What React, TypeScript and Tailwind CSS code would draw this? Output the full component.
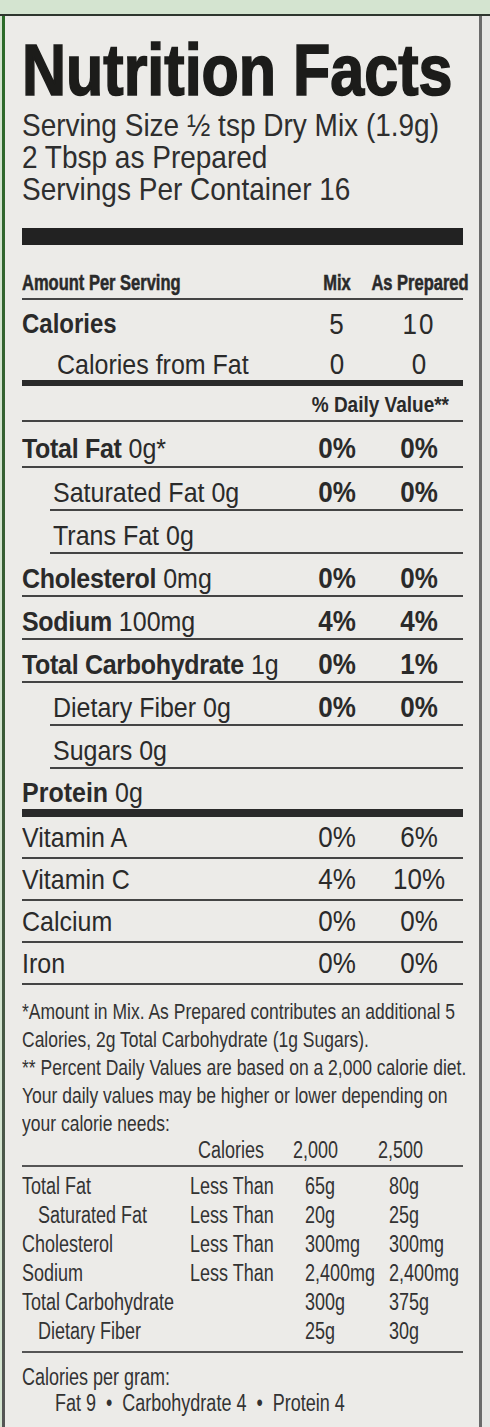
const nutrients = [
  { label: "Total Fat", amount: "0g*", bold: true, mix: "0%", prep: "0%", pad: "pt-[12px] pb-[2px]" },
  { label: "Saturated Fat", amount: "0g", indent: true, mix: "0%", prep: "0%" },
  { label: "Trans Fat", amount: "0g", indent: true },
  { label: "Cholesterol", amount: "0mg", bold: true, mix: "0%", prep: "0%" },
  { label: "Sodium", amount: "100mg", bold: true, mix: "4%", prep: "4%" },
  { label: "Total Carbohydrate", amount: "1g", bold: true, mix: "0%", prep: "1%" },
  { label: "Dietary Fiber", amount: "0g", indent: true, mix: "0%", prep: "0%" },
  { label: "Sugars", amount: "0g", indent: true },
];

const vitamins = [
  { label: "Vitamin A", mix: "0%", prep: "6%" },
  { label: "Vitamin C", mix: "4%", prep: "10%" },
  { label: "Calcium", mix: "0%", prep: "0%" },
  { label: "Iron", mix: "0%", prep: "0%" },
];

const limits = [
  { label: "Total Fat", less: "Less Than", a: "65g", b: "80g" },
  { label: "Saturated Fat", less: "Less Than", a: "20g", b: "25g", indent: true },
  { label: "Cholesterol", less: "Less Than", a: "300mg", b: "300mg" },
  { label: "Sodium", less: "Less Than", a: "2,400mg", b: "2,400mg" },
  { label: "Total Carbohydrate", less: "", a: "300g", b: "375g" },
  { label: "Dietary Fiber", less: "", a: "25g", b: "30g", indent: true },
];

// stretch text vertically a bit, the label uses a condensed face
const tall = "origin-[0_23px] scale-y-[1.14] whitespace-nowrap";
const tallC = "flex justify-center origin-[50%_23px] scale-y-[1.14] whitespace-nowrap";
const foot = "origin-[0_20px] scale-y-[1.28] whitespace-nowrap";
const small = "origin-[0_20px] scale-y-[1.28] whitespace-nowrap";

const App = () => {
  return (
    <div className="w-[490px] h-[1427px] overflow-hidden bg-[#d4e4d0] flex flex-col font-['Liberation_Sans',Arial,sans-serif] text-[#2a2a2a]">
      <div className="h-[14px] shrink-0" />
      <div className="flex flex-1 border-t-2 border-[#2e362e]">
        <div className="w-[2px]" />
        <div className="w-[3px] bg-gradient-to-b from-[#2c6b29] via-[#3a5a36] to-[#555]" />
        {/* Label */}
        <div className="w-[477px] bg-[#ecebe8] pl-[17px] pr-[16px] border-r-[3px] border-[#6a6a6a]">
          <h1 className="mt-[23px] h-[70px] text-[61px] leading-[70px] font-bold whitespace-nowrap text-[#1c1c1a] origin-[0_56px] scale-y-[1.18] [-webkit-text-stroke:1.4px_#1c1c1a]">
            Nutrition Facts
          </h1>
          <div className="mt-[2px] text-[28px] leading-[32px] text-[#2e2e2e]">
            <p className="origin-[0_25px] scale-y-[1.1]">Serving Size ½ tsp Dry Mix (1.9g)</p>
            <p className="origin-[0_25px] scale-y-[1.1]">2 Tbsp as Prepared</p>
            <p className="origin-[0_25px] scale-y-[1.1]">Servings Per Container 16</p>
          </div>
          <div className="mt-[21px] h-[17px] bg-[#222]" />

          {/* header */}
          <div className="mt-[29px] grid grid-cols-[1fr_76px_88px] text-[16.5px] leading-[20px] font-bold pb-[4px] border-b-2 border-[#444] [-webkit-text-stroke:0.4px_#2a2a2a]">
            <span className="origin-[0_16px] scale-y-[1.32] whitespace-nowrap">Amount Per Serving</span>
            <span className="flex justify-center origin-[50%_16px] scale-y-[1.32]">Mix</span>
            <span className="flex justify-center whitespace-nowrap pl-[2px] origin-[50%_16px] scale-y-[1.32]">As Prepared</span>
          </div>

          <div className="mt-[10px] grid grid-cols-[1fr_76px_88px] text-[26px] leading-[30px]">
            <span className={`${tall} font-bold text-[24px]`}>Calories</span>
            <span className={`${tallC} tracking-[1px]`}>5</span>
            <span className={`${tallC} tracking-[2px]`}>10</span>
          </div>
          <div className="mt-[10px] grid grid-cols-[1fr_76px_88px] text-[25px] leading-[30px]">
            <span className={`${tall} pl-[35px]`}>Calories from Fat</span>
            <span className={`${tallC} text-[26px]`}>0</span>
            <span className={`${tallC} text-[26px]`}>0</span>
          </div>
          <div className="h-[6px] bg-[#2a2a2a]" />

          <div className="pt-[9px] pb-[3px] pr-[14px] text-right text-[19px] leading-[22px] font-bold border-b-2 border-[#444]">
            <span className="inline-block origin-[50%_17px] scale-y-[1.14]">% Daily Value**</span>
          </div>

          {nutrients.map((n) => (
            <div key={n.label}>
              <div
                className={`grid grid-cols-[1fr_76px_88px] text-[25px] leading-[30px] ${n.pad ?? "pt-[10px] pb-[1px]"}`}
              >
                <span className={`${tall} ${n.indent ? "pl-[31px]" : ""}`}>
                  <span className={n.bold ? "font-bold tracking-[-0.3px]" : ""}>{n.label}</span> {n.amount}
                </span>
                <span className={`${tallC} font-bold text-[26px]`}>{n.mix ?? ""}</span>
                <span className={`${tallC} font-bold text-[26px]`}>{n.prep ?? ""}</span>
              </div>
              <div className={`h-[2px] bg-[#444] ${n.indent ? "ml-[28px]" : ""}`} />
            </div>
          ))}

          <div className="pt-[9px] pb-[1px] text-[25px] leading-[30px]">
            <div className={tall}>
              <span className="font-bold">Protein</span> 0g
            </div>
          </div>
          <div className="h-[8px] bg-[#2a2a2a]" />

          {vitamins.map((v) => (
            <div
              key={v.label}
              className="grid grid-cols-[1fr_76px_88px] text-[25px] leading-[30px] pt-[6px] pb-[4px] border-b-2 border-[#444]"
            >
              <span className={tall}>{v.label}</span>
              <span className={`${tallC} text-[26px]`}>{v.mix}</span>
              <span className={`${tallC} text-[26px]`}>{v.prep}</span>
            </div>
          ))}

          {/* footnote */}
          <div className="mt-[14px] text-[17.5px] leading-[28px] text-[#333]">
            <p className={foot}>*Amount in Mix. As Prepared contributes an additional 5</p>
            <p className={foot}>Calories, 2g Total Carbohydrate (1g Sugars).</p>
            <p className={foot}>** Percent Daily Values are based on a 2,000 calorie diet.</p>
            <p className={foot}>Your daily values may be higher or lower depending on</p>
            <p className={foot}>your calorie needs:</p>
          </div>

          <div className="grid grid-cols-[176px_95px_85px_1fr] text-[18px] leading-[26px] border-b-2 border-[#555] text-[#333]">
            <span />
            <span className="origin-[0_19px] scale-y-[1.28]">Calories</span>
            <span className="origin-[0_19px] scale-y-[1.28]">2,000</span>
            <span className="origin-[0_19px] scale-y-[1.28]">2,500</span>
          </div>

          <div className="pt-[7px] pb-[3px] border-b-2 border-[#555] text-[#333]">
            {limits.map((l) => (
              <div key={l.label + l.a} className="grid grid-cols-[168px_115px_84px_1fr] text-[18px] leading-[29px]">
                <span className={`${small} ${l.indent ? "pl-[16px]" : ""}`}>{l.label}</span>
                <span className={small}>{l.less}</span>
                <span className={small}>{l.a}</span>
                <span className={small}>{l.b}</span>
              </div>
            ))}
          </div>

          <div className="pt-[13px] text-[18px] leading-[26px] text-[#333]">
            <p className="origin-[0_19px] scale-y-[1.28]">Calories per gram:</p>
            <p className="pl-[33px] origin-[0_19px] scale-y-[1.28] whitespace-nowrap">
              Fat 9 &nbsp;•&nbsp; Carbohydrate 4 &nbsp;•&nbsp; Protein 4
            </p>
          </div>
        </div>
        <div className="flex-1 bg-[#e6e6e4]" />
      </div>
    </div>
  );
};

export default App;
